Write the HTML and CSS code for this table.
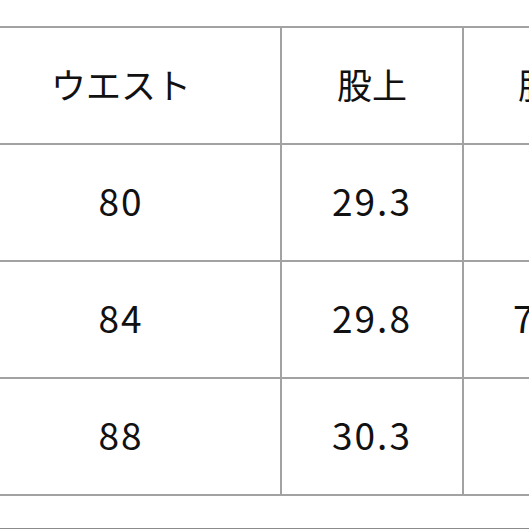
FILE: index.html
```html
<!DOCTYPE html>
<html lang="ja">
<head>
<meta charset="utf-8">
<title>サイズ表</title>
<link rel="stylesheet" href="styles.css">
</head>
<body>
<div class="page">
  <table class="size-table">
    <colgroup>
      <col class="c1"><col class="c2"><col class="c3">
    </colgroup>
    <tr class="head"><td>ウエスト</td><td>股上</td><td>股下</td></tr>
    <tr class="num"><td>80</td><td>29.3</td><td>72</td></tr>
    <tr class="num"><td>84</td><td>29.8</td><td>72.5</td></tr>
    <tr class="num"><td>88</td><td>30.3</td><td>73</td></tr>
  </table>
  <div class="footer-line"></div>
</div>
</body>
</html>
```
FILE: styles.css
```css
html, body {
  margin: 0;
  padding: 0;
  background: #ffffff;
}
body {
  width: 529px;
  height: 529px;
  overflow: hidden;
}
.page {
  padding-top: 26px;
  height: 529px;
  box-sizing: border-box;
  display: flex;
  flex-direction: column;
}
.size-table {
  margin-left: -40px;
  border-collapse: collapse;
  table-layout: fixed;
  width: 682px;
  font-family: "Noto Sans CJK JP", "Noto Sans", sans-serif;
  font-size: 35px;
  color: #111111;
}
.c1 { width: 320px; }
.c2 { width: 182px; }
.c3 { width: 180px; }
.size-table td {
  border: 2px solid #a2a2a2;
  height: 117px;
  padding: 0 0 4px 0;
  box-sizing: border-box;
  text-align: center;
  vertical-align: middle;
  line-height: 1;
}
.size-table .num td {
  font-size: 37px;
  letter-spacing: 2px;
  padding-bottom: 5px;
}
.footer-line {
  margin-top: auto;
  height: 0;
  border-bottom: 1px solid #8c8c8c;
}
```
